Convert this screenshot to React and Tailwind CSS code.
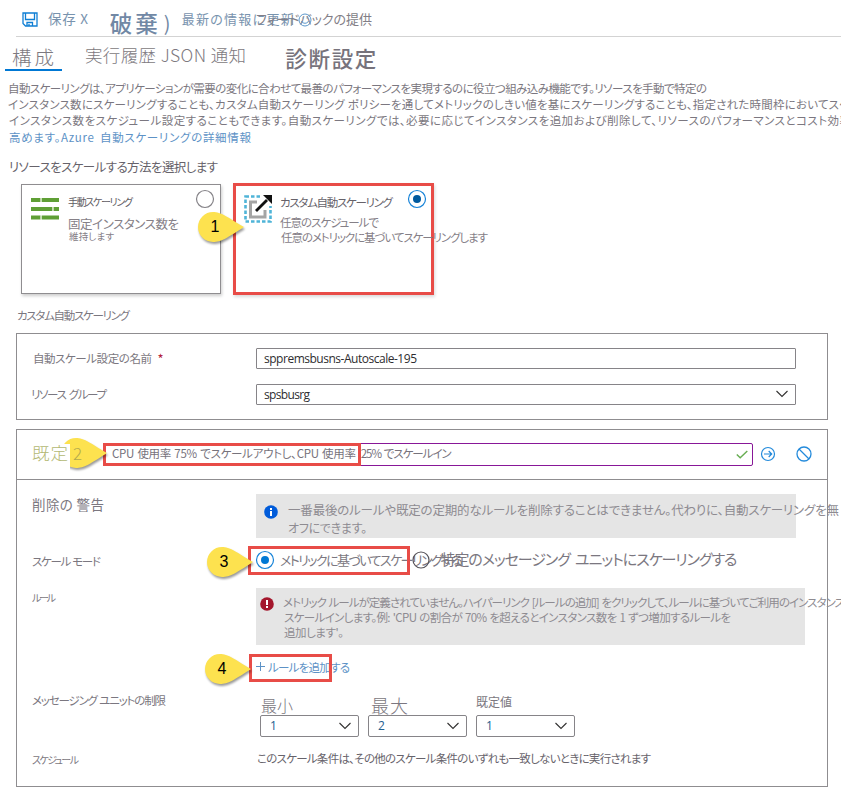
import React, { useLayoutEffect, useRef } from 'react';
import clsx from 'clsx';

// Single line of text spread to a given width through its letter spacing
const Fit = ({ w, className, children }) => {
  const ref = useRef(null);

  useLayoutEffect(() => {
    const el = ref.current;
    el.style.letterSpacing = '0px';
    const natural = el.getBoundingClientRect().width;
    el.style.letterSpacing = `${(w - natural) / (el.textContent.length - 1)}px`;
  }, [w, children]);

  return (
    <span ref={ref} className={clsx('block w-fit shrink-0 whitespace-pre', className)}>
      {children}
    </span>
  );
};

const Chevron = () => (
  <svg width="12" height="8" viewBox="0 0 12 8" fill="none" stroke="#323130" strokeWidth="1.100" className="shrink-0">
    <path d="M.500 1L6 6.500 11.500 1" />
  </svg>
);

const Marker = ({ n, className }) => (
  <div className={clsx('absolute z-20 h-[36px] w-[50px]', className)}>
    <svg width="50" height="36" viewBox="0 0 50 36" className="absolute inset-0 drop-shadow-[1px_2px_1px_rgba(0,0,0,0.4)]">
      <path d="M16 1C24 1 30 6 47 16C30 27 24 31 16 31A15 15 0 0 1 16 1Z" fill="#fde24f" />
    </svg>
    <span className="absolute left-0 top-0 w-[36px] text-center font-['Liberation_Sans'] text-[16px] leading-[32px] text-black">{n}</span>
  </div>
);

const Radio = ({ checked, className, dot = '#0078d4' }) => (
  <svg width="20" height="20" viewBox="0 0 20 20" className={clsx('shrink-0', className)}>
    <circle cx="10" cy="10" r="8.500" fill="#fff" stroke={checked ? '#1683d8' : '#858388'} strokeWidth="1.200" />
    {checked && <circle cx="10" cy="10" r="4" fill={dot} />}
  </svg>
);

const Select = ({ value }) => (
  <div className="flex h-[22px] w-[99px] items-center justify-between rounded-[2px] border border-[#868488] bg-white pl-[9px] pr-[7px] font-['Open_Sans','Noto_Sans_CJK_JP',sans-serif] text-[12px] text-[#24608f]">
    {value}
    <Chevron />
  </div>
);

const Toolbar = () => (
  <div className="ml-[16px] flex h-[37px] items-center border-b border-[#d3d3d3] text-[#7893ae]">
    <svg width="16" height="16" viewBox="0 0 16 16" fill="none" stroke="#0f7fd4" strokeWidth="1.300" className="ml-[6px] mt-[3px] shrink-0">
      <path d="M1 1h14v13H3.500L1 11.500z" />
      <path d="M3.500 1v6.500h9V1M5 14v-3.500h5.500V14M7 14v-2" />
    </svg>
    <Fit w={40} className="ml-[10px] mt-[1px] text-[13.500px]">保存 X</Fit>
    <Fit w={48} className="ml-[21px] mt-[10px] text-[22.500px] font-medium text-[#7188a5]">破棄</Fit>
    <span className="ml-[3px] mt-[10px] w-[18px] text-[20px] text-[#7188a5]">)</span>
    <Fit w={112} className="mt-[2px] text-[13px]">最新の情報に更新</Fit>
    <Fit w={116} className="ml-[-39px] mt-[2px] text-[13px] text-[#827e86]">フィードバックの提供</Fit>
    <svg width="14" height="14" viewBox="0 0 14 14" fill="none" stroke="#5d98cb" strokeWidth="1" className="ml-[-74px] mt-[4px] shrink-0">
      <circle cx="7" cy="7" r="6" />
      <path d="M3.500 8c1 3 6 3 7 0M5 4.500v1M9 4.500v1" />
    </svg>
  </div>
);

const Tabs = () => (
  <div className="flex h-[34px] text-[#7d7980]">
    <div className="ml-[5px] w-[57px] border-b-[2px] border-[#0078d4] pl-[7px] pt-[8px]">
      <Fit w={42} className="text-[19.500px] leading-[24px] font-light">構成</Fit>
    </div>
    <Fit w={161} className="ml-[23px] mt-[6px] text-[17.500px] leading-[24px] font-light">実行履歴 JSON 通知</Fit>
    <Fit w={91} className="ml-[39px] mt-[9px] text-[21.500px] leading-[24px] font-medium text-[#77737c]">診断設定</Fit>
  </div>
);

const Intro = () => (
  <div className="mt-[9px] flex flex-col items-start text-[11.500px] leading-[16.200px] text-[#7b7780]">
    <Fit w={699} className="ml-[8px]">自動スケーリングは、アプリケーションが需要の変化に合わせて最善のパフォーマンスを実現するのに役立つ組み込み機能です。リソースを手動で特定の</Fit>
    <Fit w={842} className="ml-[8px]">インスタンス数にスケーリングすることも、カスタム自動スケーリング ポリシーを通してメトリックのしきい値を基にスケーリングすることも、指定された時間枠においてスケ</Fit>
    <Fit w={842} className="ml-[9px]">インスタンス数をスケジュール設定することもできます。自動スケーリングでは、必要に応じてインスタンスを追加および削除して、リソースのパフォーマンスとコスト効率</Fit>
    <a className="ml-[9px] text-[#5d92c6] [word-spacing:2px]"><Fit w={242}>高めます。Azure 自動スケーリングの詳細情報</Fit></a>
  </div>
);

const ManualCard = () => (
  <div className="ml-[21px] mt-px flex h-[110px] w-[200px] border border-[#8f8d90] bg-white shadow-[1px_2px_3px_rgba(0,0,0,0.2)]">
    <svg width="28" height="22" viewBox="0 0 28 22" className="ml-[9px] mt-[13px] shrink-0" fill="#5f9f35">
      <path d="M0 0h9.500v4H0zM11 0h17v4H11zM0 9h21v4H0zM22.500 9H28v4h-5.500zM0 17.500h9.500v4H0zM11 17.500h17v4H11z" />
      <path d="M9.500 0H11v4H9.500zM21 9h1.500v4H21zM9.500 17.500H11v4H9.500z" fill="#c8ddb5" />
    </svg>
    <div className="ml-[9px] w-[118px] pt-[10px] text-[#858087]">
      <Fit w={65} className="text-[10px] leading-[14px] text-[#5e5b62]">手動スケーリング</Fit>
      <Fit w={111} className="mt-[6px] text-[12.500px] leading-[17px]">固定インスタンス数を</Fit>
      <Fit w={45} className="ml-[1px] mt-[-2px] text-[9.500px] leading-[13px]">維持します</Fit>
    </div>
    <Radio className="mt-[4px] ml-[9px]" />
  </div>
);

const CustomCard = () => (
  <div className="ml-[12px] flex h-[112px] w-[201px] border-[3px] border-[#e84c47] bg-white shadow-[1px_2px_3px_rgba(0,0,0,0.15)]">
    <svg width="28" height="28" viewBox="0 0 28 28" fill="none" className="ml-[8px] mt-[9px] shrink-0">
      <rect x="1.500" y="1.500" width="25" height="25" stroke="#4fb4d8" strokeWidth="2.600" strokeDasharray="3.500 2" />
      <path d="M17 0h11v11h-4L17 5z" fill="#fff" />
      <path d="M13 7H6.500v15H21v-7" stroke="#a5a5a5" strokeWidth="3" />
      <path d="M12 16L23 5" stroke="#111" strokeWidth="2.800" />
      <path d="M19 0H28v9z" fill="#111" />
    </svg>
    <div className="ml-[8px] w-[127px] pt-[8px] text-[#858087]">
      <Fit w={113} className="text-[11.500px] leading-[16px] text-[#66626a]">カスタム自動スケーリング</Fit>
      <Fit w={99} className="mt-[5px] text-[11.500px] leading-[15px]">任意のスケジュールで</Fit>
      <Fit w={207} className="relative z-10 ml-[1px] text-[11.500px] leading-[15px]">任意のメトリックに基づいてスケーリングします</Fit>
    </div>
    <Radio checked dot="#005a9e" className="mt-[3px]" />
  </div>
);

const ResourcePanel = () => (
  <div className="ml-[16px] h-[87px] w-[812px] border border-[#8f8d90] pt-[14px] text-[11.500px] leading-[21px] text-[#7b7780]">
    <div className="flex">
      <div className="flex w-[239px] pl-[16px]">
        <Fit w={119}>自動スケール設定の名前</Fit>
        <span className="ml-[6px] text-[13px] text-[#b3223a]">*</span>
      </div>
      <div className="h-[21px] w-[540px] rounded-[1px] border border-[#868488] pl-[7px] font-['Open_Sans'] leading-[19px] text-[#2e2d30]">
        <Fit w={153} className="text-[12px]">sppremsbusns-Autoscale-195</Fit>
      </div>
    </div>
    <div className="mt-[15px] flex">
      <div className="w-[239px] pl-[14px]">
        <Fit w={76} className="[word-spacing:2px]">リソース グループ</Fit>
      </div>
      <div className="flex h-[21px] w-[540px] items-center justify-between rounded-[1px] border border-[#868488] pl-[7px] pr-[7px] font-['Open_Sans'] text-[#2e2d30]">
        <Fit w={46} className="text-[12px] leading-[19px]">spsbusrg</Fit>
        <Chevron />
      </div>
    </div>
  </div>
);

const ConditionHeader = () => (
  <div className="flex h-[50px] border-b border-[#8f8d90] pt-[13px]">
    <div className="relative z-30 ml-[14px] mt-[1px] h-[26px] w-[39px] bg-white pl-[1px] text-[#b3b873]">
      <Fit w={36} className="text-[17.500px] leading-[18px] font-light">既定</Fit>
    </div>
    <div className="ml-[33px] flex h-[23px] w-[650px] items-center justify-between rounded-[2px] border border-[#881798] pr-[4px] text-[#77737c]">
      <div className="relative z-10 mb-[2px] ml-[8px] flex gap-[5px] [word-spacing:1px]">
        <Fit w={244}>CPU 使用率 75% でスケールアウトし、CPU 使用率</Fit>
        <Fit w={91}>25% でスケールイン</Fit>
      </div>
      <svg width="12" height="9" viewBox="0 0 12 9" fill="none" stroke="#67ad52" strokeWidth="1.400">
        <path d="M.800 4.500l3.400 3.300L11.300 1" />
      </svg>
    </div>
    <svg width="16" height="16" viewBox="0 0 16 16" fill="none" stroke="#238adb" strokeWidth="1.200" className="ml-[7px] mt-[3px]">
      <circle cx="8" cy="8" r="6.500" />
      <path d="M4 8h7.500M8.700 5l3 3-3 3" />
    </svg>
    <svg width="16" height="16" viewBox="0 0 16 16" fill="none" stroke="#238adb" strokeWidth="1.300" className="ml-[20px] mt-[3px]">
      <circle cx="8" cy="8" r="7" />
      <path d="M3 3l10 10" />
    </svg>
  </div>
);

const ConditionPanel = () => (
  <div className="relative ml-[16px] mt-[9px] h-[358px] w-[812px] border border-[#8f8d90] text-[11.500px] text-[#7b7780]">
    <ConditionHeader />

    {/* Delete warning */}
    <div className="mt-[14px] flex h-[44px]">
      <div className="w-[239px] pl-[15px]">
        <Fit w={72} className="text-[13.500px] leading-[21px]">削除の 警告</Fit>
      </div>
      <div className="flex w-[540px] bg-[#e5e5e5] text-[#8e8b91]">
        <svg width="14" height="14" viewBox="0 0 14 14" className="ml-[8px] mt-[11px] shrink-0">
          <circle cx="7" cy="7" r="6.800" fill="#015cda" />
          <path d="M6 6h2v5H6zM6 3h2v2H6z" fill="#fff" />
        </svg>
        <div className="ml-[10px] pt-[6px]">
          <Fit w={551} className="text-[12.500px] leading-[20px]">一番最後のルールや既定の定期的なルールを削除することはできません。代わりに、自動スケーリングを無</Fit>
          <Fit w={79} className="text-[12px] leading-[16px]">オフにできます。</Fit>
        </div>
      </div>
    </div>

    {/* Scale mode */}
    <div className="mt-[8px] flex h-[29px]">
      <div className="w-[238px] pl-[15px] pt-[6px]">
        <Fit w={69} className="leading-[18px] [word-spacing:1px]">スケール モード</Fit>
      </div>
      <Radio checked className="mt-[4px]" />
      <Fit w={183} className="ml-[5px] mt-[4px] text-[13px] leading-[20px]">メトリックに基づいてスケーリングする</Fit>
      <svg width="20" height="20" viewBox="0 0 20 20" fill="none" stroke="#555258" strokeWidth="1.200" className="ml-[-50px] mt-[4px] shrink-0">
        <circle cx="10" cy="10" r="8" />
      </svg>
      <Fit w={297} className="ml-[9px] mt-[2px] text-[15px] leading-[22px] [word-spacing:3px]">特定のメッセージング ユニットにスケーリングする</Fit>
    </div>

    {/* Rules */}
    <div className="mt-[13px] flex h-[57px]">
      <div className="w-[239px] pl-[15px]">
        <Fit w={24} className="text-[10px] leading-[20px]">ルール</Fit>
      </div>
      <div className="flex w-[549px] bg-[#e5e5e5] text-[#8e8b91]">
        <svg width="14" height="14" viewBox="0 0 14 14" className="ml-[4px] mt-[9px] shrink-0">
          <circle cx="7" cy="7" r="6.800" fill="#a4162c" />
          <path d="M6 3h2v5H6zM6 9h2v2H6z" fill="#fff" />
        </svg>
        <div className="ml-[9px] pt-[6px] [word-spacing:1px]">
          <Fit w={562} className="leading-[16px]">メトリック ルールが定義されていません。ハイパーリンク [ルールの追加] をクリックして、ルールに基づいてご利用のインスタンス</Fit>
          <Fit w={447} className="ml-[1px] leading-[15px]">スケールインします。例: 'CPU の割合が 70% を超えるとインスタンス数を 1 ずつ増加するルールを</Fit>
          <Fit w={60} className="ml-[1px] leading-[14px]">追加します'。</Fit>
        </div>
      </div>
    </div>
    <a className="ml-[239px] mt-[12px] flex h-[20px] items-center text-[#5d92c6]">
      <svg width="9" height="9" viewBox="0 0 9 9" stroke="#5d92c6" fill="none">
        <path d="M4.500 0v9M0 4.500h9" />
      </svg>
      <Fit w={82} className="ml-[3px] leading-[20px]">ルールを追加する</Fit>
    </a>

    {/* Instance limits */}
    <div className="mt-[13px] flex h-[47px]">
      <div className="w-[243px] pl-[15px]">
        <Fit w={134} className="leading-[20px] [word-spacing:1px]">メッセージング ユニットの制限</Fit>
      </div>
      <div className="flex gap-[9px]">
        <div className="w-[99px]">
          <Fit w={32} className="mb-[1px] ml-[1px] pt-[6px] text-[16px] leading-[18px] font-light">最小</Fit>
          <Select value="1" />
        </div>
        <div className="w-[99px]">
          <Fit w={37} className="mb-[1px] ml-[3px] pt-[6px] text-[18px] leading-[18px] font-light">最大</Fit>
          <Select value="2" />
        </div>
        <div className="w-[99px]">
          <Fit w={36} className="mb-[2px] text-[12px] leading-[23px]">既定値</Fit>
          <Select value="1" />
        </div>
      </div>
    </div>

    {/* Schedule */}
    <div className="mt-[11px] flex">
      <div className="w-[240px] pl-[15px] pt-[2px]">
        <Fit w={47} className="text-[10px] leading-[20px]">スケジュール</Fit>
      </div>
      <Fit w={394} className="leading-[20px] text-[#67636b]">このスケール条件は、その他のスケール条件のいずれも一致しないときに実行されます</Fit>
    </div>
  </div>
);

const App = () => {
  return (
    <div className="relative h-[800px] w-[841px] overflow-hidden bg-white font-['Noto_Sans_CJK_JP',sans-serif] [font-feature-settings:'palt']">
      <Toolbar />
      <Tabs />
      <Intro />

      <div className="mt-[12px] h-[26px] pl-[9px] text-[12.500px] leading-[20px] text-[#66626a]">
        <Fit w={209}>リソースをスケールする方法を選択します</Fit>
      </div>
      <div className="flex h-[112px]">
        <ManualCard />
        <CustomCard />
      </div>
      <div className="h-[38px] pl-[17px] pt-[10px] text-[11.500px] leading-[20px] text-[#7b7780]">
        <Fit w={113}>カスタム自動スケーリング</Fit>
      </div>
      <ResourcePanel />
      <ConditionPanel />

      {/* Highlight frames and step markers */}
      <div className="absolute left-[103px] top-[443px] h-[23px] w-[258px] border-[3px] border-[#e84c47]" />
      <div className="absolute left-[248px] top-[546px] h-[29px] w-[162px] border-[3px] border-[#e84c47]" />
      <div className="absolute left-[249px] top-[654px] h-[28px] w-[83px] border-[3px] border-[#e84c47]" />
      <Marker n="1" className="left-[197px] top-[211px]" />
      <Marker n="" className="left-[60px] top-[437px]" />
      <span className="absolute left-[73px] top-[440px] z-30 text-[17px] leading-[26px] font-light text-[#b3aa4e]">2</span>
      <Marker n="3" className="left-[206px] top-[546px]" />
      <Marker n="4" className="left-[204px] top-[653px]" />
    </div>
  );
};

export default App;
